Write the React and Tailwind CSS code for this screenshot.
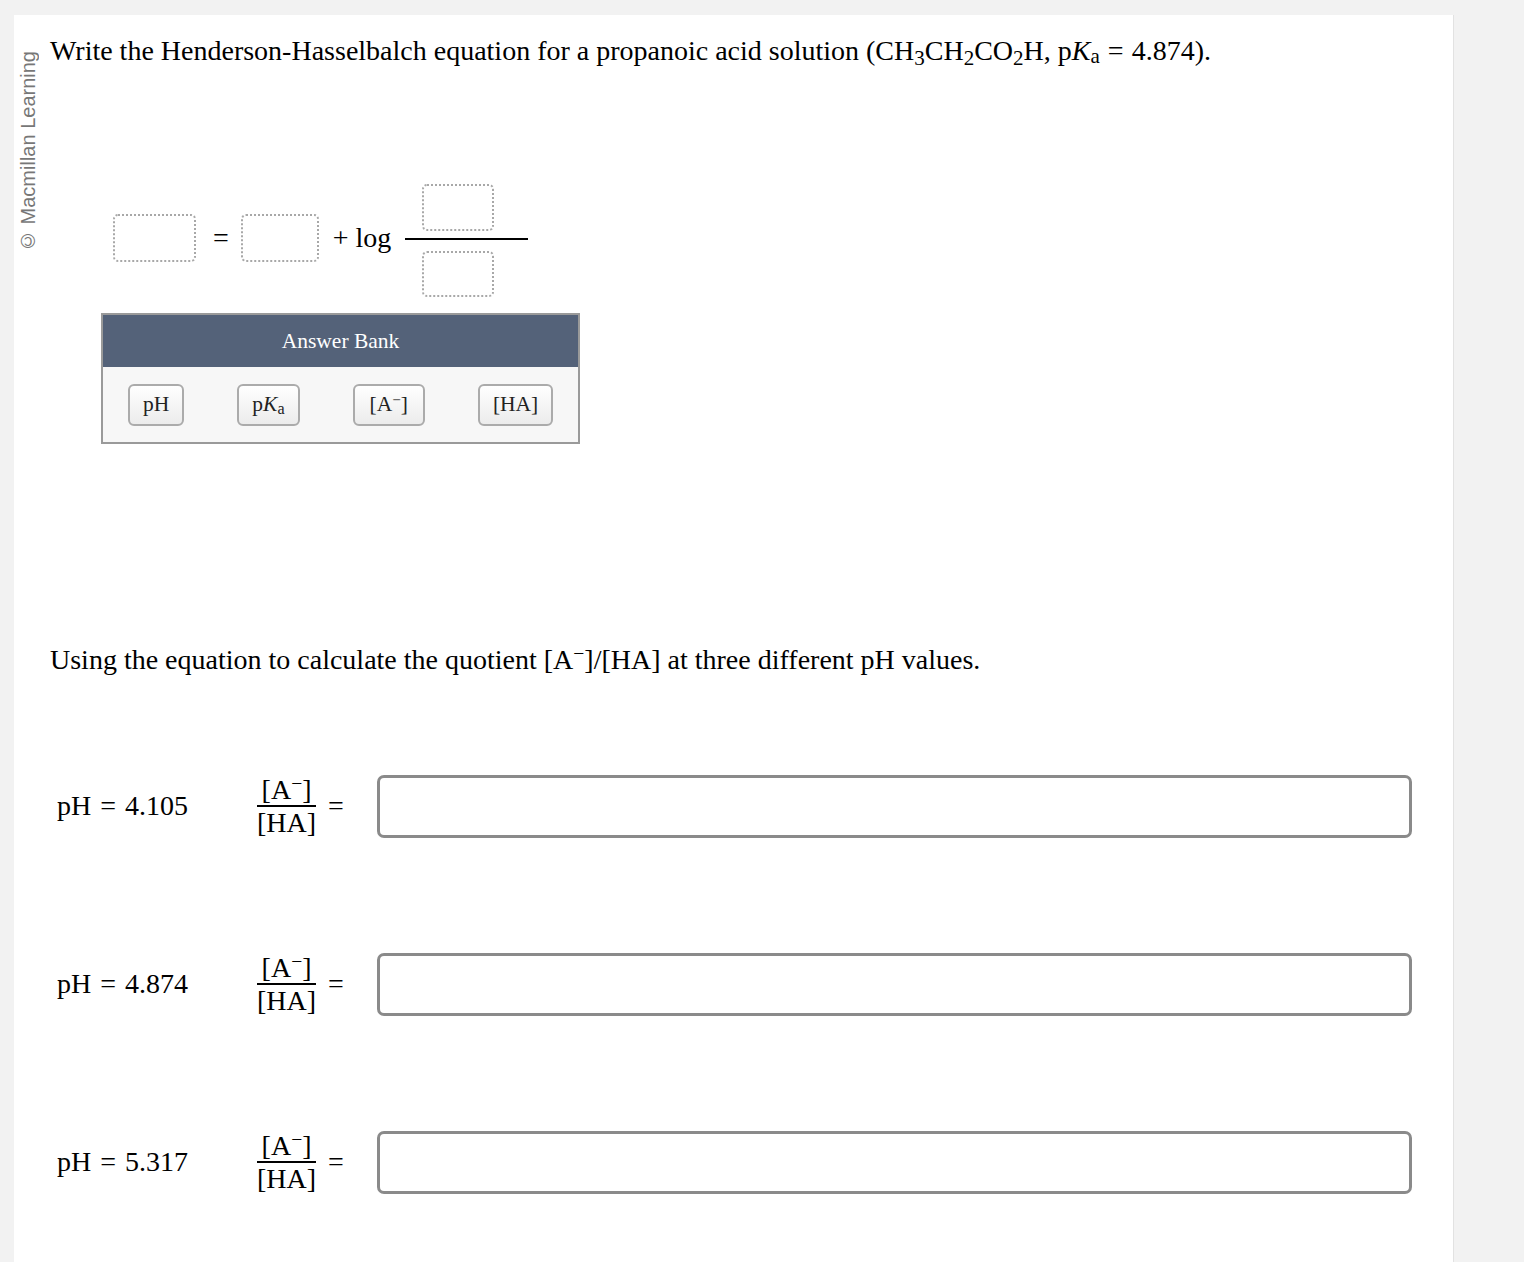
import React from 'react';

const serif = "font-['Liberation_Serif','Times_New_Roman',serif]";

function DropBox({ className = '' }) {
  return (
    <div className={`border-2 border-dotted border-[#a8a8a8] rounded-[5px] bg-white ${className}`} />
  );
}

function Minus() {
  return <span className="relative -top-[0.45em] text-[0.7em] leading-none">−</span>;
}

function Pka() {
  return (
    <span>
      p<i>K</i><sub className="text-[0.75em] -bottom-[0.15em]">a</sub>
    </span>
  );
}

function BankItem({ children, wide }) {
  return (
    <div className={`h-[42px] ${wide ? 'px-[15px]' : 'px-[13px]'} flex items-center border-2 border-[#ababab] rounded-[6px] bg-gradient-to-b from-white to-[#ececec] text-[21.5px] text-[#222]`}>
      {children}
    </div>
  );
}

function QuotientRow({ ph }) {
  return (
    <div className="flex items-center">
      <div className="w-[207px] pl-[7px] text-[28px]">pH<span className="mx-[9px]">=</span>{ph}</div>
      <div className="flex flex-col items-center text-[28px] leading-[31px]">
        <span className="px-[1px]">[A<Minus />]</span>
        <span className="w-full border-t-2 border-black" />
        <span>[HA]</span>
      </div>
      <span className="ml-[12px] text-[28px]">=</span>
      <input
        type="text"
        className="ml-[33px] w-[1035px] h-[63px] border-[3px] border-[#8a8a8a] rounded-[7px] bg-white outline-none"
      />
    </div>
  );
}

export default function App() {
  return (
    <div className={`min-h-screen bg-[#f2f2f2] pt-[15px] pl-[14px] ${serif}`}>
      <div className="w-[1440px] min-h-[1247px] bg-white border-r border-[#e2e2e2] flex text-black">
        <div className="w-[36px] shrink-0 pt-[36px] pl-[3px] flex justify-start items-start">
          <span className="[writing-mode:vertical-rl] rotate-180 font-['Helvetica','Liberation_Sans',Arial,sans-serif] text-[20px] leading-[22px] text-[#777]">
            © Macmillan Learning
          </span>
        </div>

        <div className="flex-1">
          <p className="mt-[18px] text-[28px] leading-[36px]">
            Write the Henderson-Hasselbalch equation for a propanoic acid solution (CH<sub>3</sub>CH<sub>2</sub>CO<sub>2</sub>H, <Pka /><span className="mx-[8px]">=</span>4.874).
          </p>

          <div className="mt-[115px] ml-[63px] flex items-center text-[28px]">
            <DropBox className="mb-[6px] w-[83px] h-[48px]" />
            <span className="ml-[17px] mb-[6px]">=</span>
            <DropBox className="ml-[12px] mb-[6px] w-[78px] h-[48px]" />
            <span className="ml-[14px] mb-[6px]">+ log</span>
            <div className="ml-[14px] w-[123px] flex flex-col items-start">
              <DropBox className="ml-[17px] w-[72px] h-[47px]" />
              <span className="mt-[7px] w-full border-t-2 border-black" />
              <DropBox className="ml-[17px] mt-[11px] w-[72px] h-[46px]" />
            </div>
          </div>

          <div className="mt-[16px] ml-[51px] w-[479px] border-2 border-[#9a9a9a]">
            <div className="h-[52px] bg-[#546279] text-white text-[21.5px] flex items-center justify-center">
              Answer Bank
            </div>
            <div className="h-[75px] bg-[#f7f7f7] flex items-center gap-[53px] pl-[25px]">
              <BankItem>pH</BankItem>
              <BankItem><Pka /></BankItem>
              <BankItem wide><span>[A<Minus />]</span></BankItem>
              <BankItem>[HA]</BankItem>
            </div>
          </div>

          <p className="mt-[198px] text-[28px] leading-[36px]">
            Using the equation to calculate the quotient [A<Minus />]/[HA] at three different pH values.
          </p>

          <div className="mt-[96px] flex flex-col gap-[114px]">
            <QuotientRow ph="4.105" />
            <QuotientRow ph="4.874" />
            <QuotientRow ph="5.317" />
          </div>
        </div>
      </div>
    </div>
  );
}
